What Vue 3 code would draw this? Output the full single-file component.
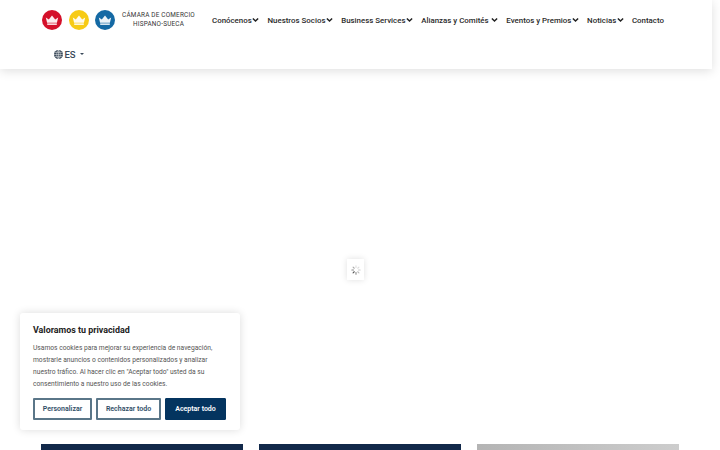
<script setup>
const navItems = [
  { label: 'Conócenos', caret: true },
  { label: 'Nuestros Socios', caret: true },
  { label: 'Business Services', caret: true },
  { label: 'Alianzas y Comités', caret: true, gap: true },
  { label: 'Eventos y Premios', caret: true },
  { label: 'Noticias', caret: true },
  { label: 'Contacto', caret: false }
]
const logos = ['#d4102a', '#f7cb15', '#1469a4']
const cards = ['navy', 'navy', 'grey']
</script>

<template>
  <div class="page">
    <header class="header">
      <div class="row-top">
        <div class="logo">
          <svg v-for="c in logos" :key="c" class="crest" viewBox="0 0 20 20">
            <circle cx="10" cy="10" r="10" :fill="c" />
            <path d="M3.800 7.400l3 2.200L10 5.600l3.200 4 3-2.200-1.300 5.400H5.100z" fill="#fff" opacity=".92" />
            <rect x="5.200" y="13.400" width="9.600" height="1.500" fill="#fff" opacity=".92" />
          </svg>
          <div class="logo-text">CÁMARA DE COMERCIO<br>HISPANO-SUECA</div>
        </div>
        <nav class="nav">
          <a v-for="item in navItems" :key="item.label" class="nav-item">
            <span class="nav-label">{{ item.label }}</span>
            <svg v-if="item.caret" class="chev" :class="{ spaced: item.gap }" viewBox="0 0 8 6">
              <path d="M1 1.200l3 3 3-3" fill="none" stroke="#222" stroke-width="1.700" />
            </svg>
          </a>
        </nav>
      </div>
      <div class="lang">
        <svg class="globe" viewBox="0 0 16 16">
          <circle cx="8" cy="8" r="8" fill="#3b4a5a" />
          <path d="M0 8h16M1.500 4.200h13M1.500 11.800h13M8 0v16M8 0C3.800 3.500 3.800 12.500 8 16M8 0c4.200 3.500 4.200 12.500 0 16" fill="none" stroke="#fff" stroke-width=".8" />
        </svg>
        <span class="lang-label">ES</span>
        <span class="lang-caret"></span>
      </div>
    </header>

    <main class="main">
      <div v-for="(c, i) in cards" :key="i" class="card" :class="c"></div>
    </main>

    <div class="loader">
      <svg viewBox="0 0 12 12" class="spin">
        <g stroke-width="1.300" stroke-linecap="round">
          <path d="M6 1v2" stroke="#ddd" />
          <path d="M9.500 2.500L8.100 3.900" stroke="#ddd" />
          <path d="M11 6H9" stroke="#ccc" />
          <path d="M9.500 9.500L8.100 8.100" stroke="#bbb" />
          <path d="M6 11V9" stroke="#888" />
          <path d="M2.500 9.500l1.400-1.400" stroke="#555" />
          <path d="M1 6h2" stroke="#888" />
          <path d="M2.500 2.500l1.400 1.400" stroke="#aaa" />
        </g>
      </svg>
    </div>

    <aside class="cookie">
      <h2 class="cookie-title">Valoramos tu privacidad</h2>
      <p class="cookie-text">Usamos cookies para mejorar su experiencia de navegación, mostrarle anuncios o contenidos personalizados y analizar nuestro tráfico. Al hacer clic en "Aceptar todo" usted da su consentimiento a nuestro uso de las cookies.</p>
      <div class="cookie-actions">
        <button class="btn outline b1">Personalizar</button>
        <button class="btn outline b2">Rechazar todo</button>
        <button class="btn solid b3">Aceptar todo</button>
      </div>
    </aside>
  </div>
</template>

<style>
html, body { margin: 0; background: #fff; overflow: hidden; }
</style>

<style scoped>
.page {
  position: relative;
  width: 720px;
  height: 450px;
  overflow: hidden;
  background: #fff;
  font-family: "Roboto", "Liberation Sans", sans-serif;
}
.header {
  width: 712px;
  height: 69px;
  box-sizing: border-box;
  padding: 10px 0 0 42px;
  background: #fff;
  box-shadow: 0 2px 10px rgba(0, 0, 0, .13);
}
.row-top { display: flex; align-items: center; height: 20px; }
.logo { display: flex; align-items: center; gap: 6.500px; width: 170px; flex: none; }
.crest { width: 20px; height: 20px; flex: none; }
.logo-text {
  width: 74px;
  text-align: center;
  font-size: 6.400px;
  line-height: 9px;
  letter-spacing: .2px;
  color: #333;
  white-space: nowrap;
}
.nav { display: flex; align-items: center; gap: 8px; }
.nav-item { display: flex; align-items: center; gap: .7px; color: #2b2b2b; font-size: 7.900px; font-weight: 500; }
.nav-label { white-space: nowrap; }
.chev { width: 7px; height: 6px; flex: none; }
.chev.spaced { margin-left: 2px; }
.lang {
  display: flex;
  align-items: center;
  margin: 14px 0 0 12px;
  height: 20px;
  color: #3b4a5a;
  font-size: 9.500px;
  font-weight: 500;
}
.globe { width: 9px; height: 9px; margin-right: 1.500px; }
.lang-caret {
  margin-left: 4px;
  border: 2.800px solid transparent;
  border-top-color: #3b4a5a;
  border-bottom-width: 0;
}
.main {
  display: flex;
  gap: 16px;
  padding: 375px 0 0 41px;
}
.card { width: 202px; height: 6px; }
.card.navy { background: #12294a; }
.card.grey { background: linear-gradient(90deg, #b4b4b4, #cdcdcd); }
.loader {
  position: absolute;
  left: 347px;
  top: 259px;
  width: 17px;
  height: 21px;
  display: flex;
  align-items: center;
  justify-content: center;
  background: #fff;
  box-shadow: 0 0 6px rgba(0, 0, 0, .13);
}
.spin { width: 10px; height: 10px; }
.cookie {
  position: absolute;
  left: 20px;
  top: 313px;
  width: 220px;
  height: 117px;
  box-sizing: border-box;
  padding: 11px 13px 0;
  background: #fff;
  border-radius: 3px;
  box-shadow: 0 0 8px rgba(0, 0, 0, .14);
}
.cookie-title {
  margin: 0;
  font-size: 8.900px;
  font-weight: 700;
  line-height: 12px;
  color: #222;
}
.cookie-text {
  margin: 6px 0 0;
  font-size: 6.700px;
  line-height: 12px;
  color: #555;
}
.cookie-actions { display: flex; gap: 4px; margin-top: 8px; }
.btn {
  box-sizing: border-box;
  height: 22px;
  padding: 0;
  border-radius: 1px;
  font-family: "Roboto", sans-serif;
  font-size: 7px;
  font-weight: 600;
}
.outline { background: #fff; color: #2f4d66; border: 2px solid #5a7688; }
.solid { background: #04345f; color: #fff; border: 1px solid #04345f; }
.b1 { width: 59px; }
.b2 { width: 65px; }
.b3 { width: 61px; }
</style>
